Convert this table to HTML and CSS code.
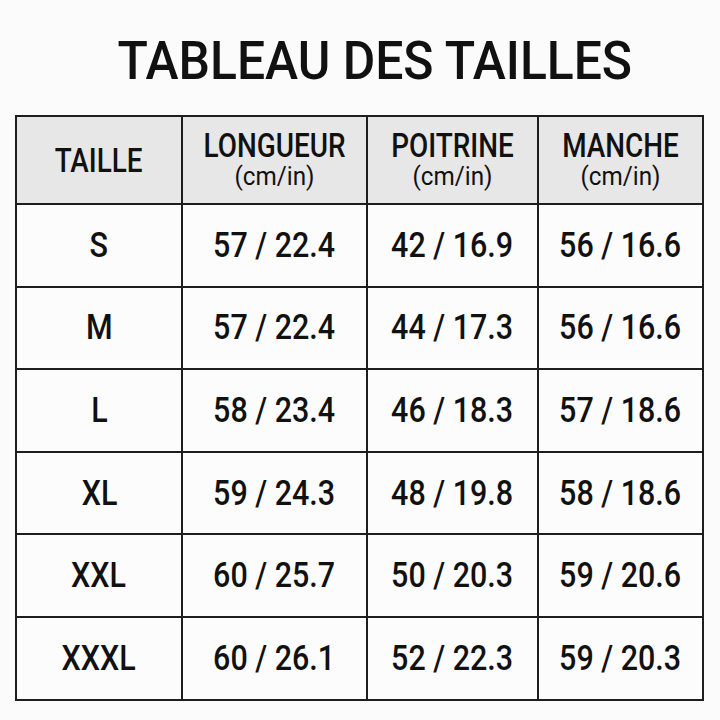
FILE: index.html
```html
<!DOCTYPE html>
<html>
<head>
<meta charset="utf-8">
<link rel="stylesheet" href="styles.css">
</head>
<body>
<div class="page">
  <h1 class="title"><span class="cond t">TABLEAU DES TAILLES</span></h1>
  <table class="chart">
    <colgroup>
      <col class="c1"><col class="c2"><col class="c3"><col class="c4">
    </colgroup>
    <thead>
      <tr>
        <th><span class="cond head">TAILLE</span></th>
        <th><span class="blk head">LONGUEUR</span><span class="blk unit">(cm/in)</span></th>
        <th><span class="blk head">POITRINE</span><span class="blk unit">(cm/in)</span></th>
        <th><span class="blk head">MANCHE</span><span class="blk unit">(cm/in)</span></th>
      </tr>
    </thead>
    <tbody>
      <tr><td><span class="cond">S</span></td><td><span class="cond">57 / 22.4</span></td><td><span class="cond">42 / 16.9</span></td><td><span class="cond">56 / 16.6</span></td></tr>
      <tr><td><span class="cond">M</span></td><td><span class="cond">57 / 22.4</span></td><td><span class="cond">44 / 17.3</span></td><td><span class="cond">56 / 16.6</span></td></tr>
      <tr><td><span class="cond">L</span></td><td><span class="cond">58 / 23.4</span></td><td><span class="cond">46 / 18.3</span></td><td><span class="cond">57 / 18.6</span></td></tr>
      <tr><td><span class="cond">XL</span></td><td><span class="cond">59 / 24.3</span></td><td><span class="cond">48 / 19.8</span></td><td><span class="cond">58 / 18.6</span></td></tr>
      <tr><td><span class="cond">XXL</span></td><td><span class="cond">60 / 25.7</span></td><td><span class="cond">50 / 20.3</span></td><td><span class="cond">59 / 20.6</span></td></tr>
      <tr><td><span class="cond">XXXL</span></td><td><span class="cond">60 / 26.1</span></td><td><span class="cond">52 / 22.3</span></td><td><span class="cond">59 / 20.3</span></td></tr>
    </tbody>
  </table>
</div>
</body>
</html>
```
FILE: styles.css
```css
html, body {
  margin: 0;
  padding: 0;
  background: #fbfbfb;
}
body {
  font-family: Roboto, "Liberation Sans", sans-serif;
  color: #111;
  width: 720px;
  height: 720px;
  overflow: hidden;
}
.page {
  padding: 27px 0 0 15px;
}
.cond {
  display: inline-block;
  transform: scaleX(0.87);
  white-space: nowrap;
}
.blk {
  display: block;
  white-space: nowrap;
}
.title {
  margin: 0;
  height: 88px;
  font-size: 53px;
  font-weight: 500;
  line-height: 68px;
  text-align: center;
  width: 692px;
  padding-left: 28px;
  box-sizing: border-box;
}
.title .t {
  transform: scaleX(0.94);
}
.chart {
  border-collapse: collapse;
  table-layout: fixed;
  width: 687px;
  border: 2px solid #1e1e1e;
}
.c1 { width: 166px; }
.c2 { width: 185px; }
.c3 { width: 171px; }
.c4 { width: 165px; }
.chart th, .chart td {
  border: 2px solid #1e1e1e;
  text-align: center;
  vertical-align: middle;
  padding: 0;
}
.chart th {
  background: #e7e7e7;
  height: 86px;
  font-weight: 500;
  line-height: 1;
}
.head {
  font-size: 34px;
  font-weight: 500;
  line-height: 32px;
  transform: scaleX(0.82);
}
.unit {
  font-size: 25px;
  font-weight: 400;
  line-height: 28px;
  padding-top: 2px;
  transform: scaleX(0.97);
}
.chart td {
  height: 80.6px;
  font-size: 35px;
  font-weight: 500;
  background: #fcfcfc;
}
```
